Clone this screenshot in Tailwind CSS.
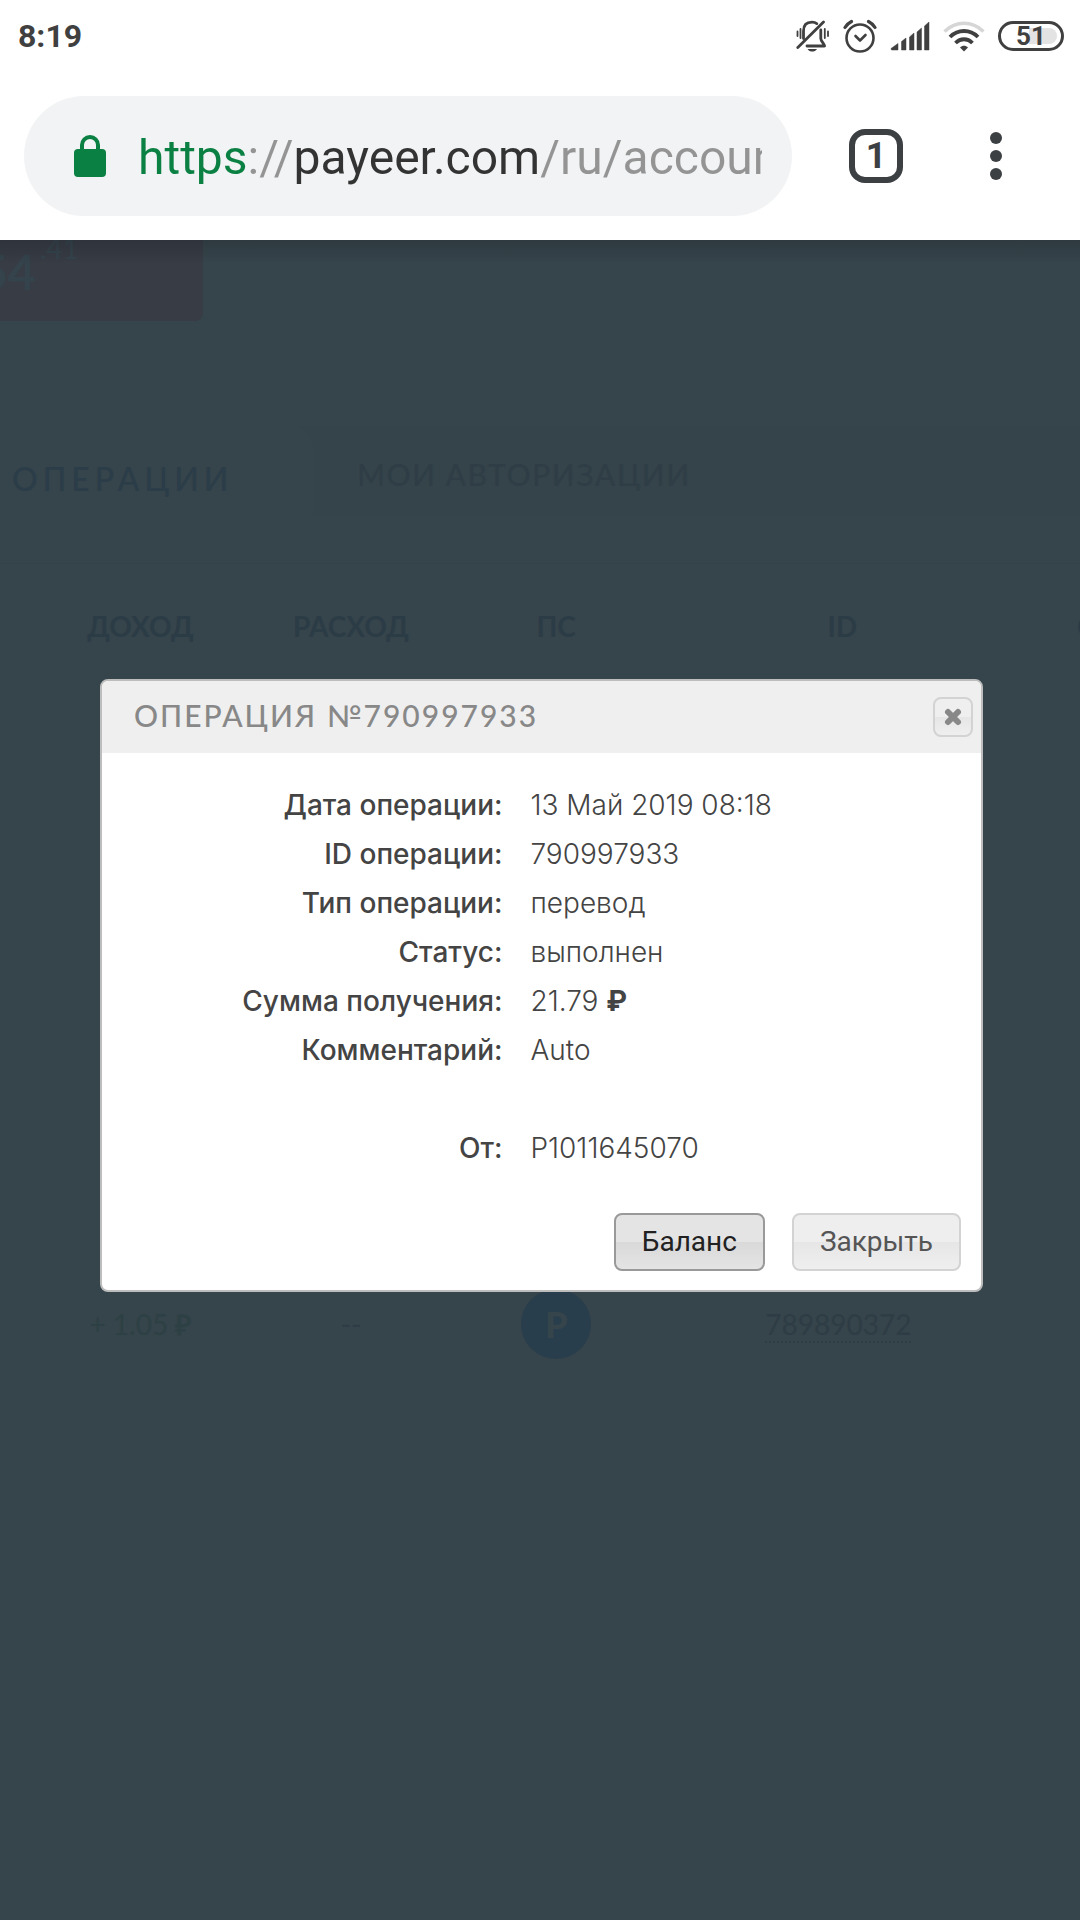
<!DOCTYPE html>
<html lang="ru">

<head>
  <meta charset="UTF-8">
  <meta name="viewport" content="width=device-width, initial-scale=1.0">
  <title>Payeer</title>
  <script src="https://cdn.jsdelivr.net/npm/@tailwindcss/browser@4"></script>
</head>

<body class="bg-[#36444b] min-h-screen flex flex-col overflow-x-hidden">
  <!-- Status bar -->
  <div class="bg-white h-[72px] flex items-center justify-between pl-[18px] pr-4 text-[#404040] font-['Roboto',sans-serif]">
    <span class="text-[32px] leading-none font-bold">8:19</span>
    <div class="flex items-center gap-[13px]">
      <!-- muted bell -->
      <svg width="34" height="34" viewBox="0 0 34 34" fill="none" stroke="currentColor" stroke-width="2.8" stroke-linecap="round">
        <path d="M7.500 19.500V12C7.500 6 11 3.200 16 3.200c2 0 3.600.5 4.800 1.400" />
        <path d="M24.800 11V19.500c0 2.500 3 4.500 3.800 7.500H11" stroke-linejoin="round" />
        <path d="M1.800 28.500L27.500 3" />
        <path d="M4.500 10v9M1.500 12.500v4.500M28.800 10v9M32 12.500v4.500" stroke-width="1.800" />
        <path d="M11.500 30h9.500c-1.300 1.800-2.800 2.600-4.700 2.600s-3.500-.8-4.800-2.600z" fill="currentColor" stroke="none" />
      </svg>
      <!-- alarm -->
      <svg width="34" height="34" viewBox="0 0 34 34" fill="none" stroke="currentColor" stroke-width="2.600" stroke-linecap="round" stroke-linejoin="round">
        <circle cx="17" cy="19" r="13.500" />
        <path d="M12.500 17l4.500 4.500 5.500-5.500" />
        <path d="M2 8.500Q4.500 4.500 8.500 2.500M25.500 2.500Q29.500 4.500 32 8.500" stroke-width="3.200" />
      </svg>
      <!-- signal -->
      <svg width="40" height="30" viewBox="0 0 40 30" fill="currentColor">
        <path d="M1 27.500L8 22.500v6.500H1.500zM11.500 20.500L16 17v12h-4.500zM19.500 16L24 12v17h-4.500zM27 11l4.500-4v22H27zM34.500 5L39 1v28h-4.500z" stroke="currentColor" stroke-width=".5" stroke-linejoin="round" />
      </svg>
      <!-- wifi -->
      <svg width="42" height="32" viewBox="0 0 42 32" fill="none" stroke="currentColor" stroke-width="3.800">
        <path d="M1.500 11.500C13 .5 29 .5 40.500 11.500" stroke="#d6d6d6" stroke-width="3.400" />
        <path d="M7 17c8-8 20-8 28 0" />
        <path d="M12.500 23c5-5 12-5 17 0" />
        <path d="M17 27.500c2.500-2.400 5.500-2.400 8 0L21 31.500z" fill="currentColor" stroke="none" />
      </svg>
      <!-- battery -->
      <div class="relative w-[66px] h-[30px] rounded-full border-3 border-[#404040] flex items-center justify-center">
        <div class="absolute right-1 inset-y-1 w-[28px] rounded-r-full bg-[#e3e3e3]"></div>
        <span class="relative text-[26px] leading-none font-bold">51</span>
      </div>
    </div>
  </div>

  <!-- Browser toolbar -->
  <div class="bg-white h-[168px] flex items-center pl-6 pr-[78px] font-['Roboto',sans-serif]">
    <label class="flex-1 min-w-0 h-[120px] bg-[#f1f3f5] rounded-full flex items-center pl-[50px] pr-[30px] gap-8">
      <svg class="shrink-0" width="32" height="44" viewBox="0 0 32 44">
        <rect y="15" width="32" height="28" rx="4" fill="#0b8043" />
        <path d="M8 17V11a8 8 0 0 1 16 0v6" fill="none" stroke="#0b8043" stroke-width="4" />
      </svg>
      <input type="text" aria-label="Адрес" value="https://payeer.com/ru/account" class="flex-1 min-w-0 h-[72px] pt-1 text-[48px] outline-none text-transparent bg-clip-text bg-[linear-gradient(90deg,#0b8043_109px,#949494_109px,#949494_156px,#333333_156px,#333333_400px,#949494_400px)]">
    </label>
    <button aria-label="Вкладки" class="ml-[57px] size-[54px] rounded-2xl border-6 border-[#3c4043] text-[#3c4043] text-[36px] leading-none font-bold flex items-center justify-center">1</button>
    <button aria-label="Меню" class="ml-[87px] flex flex-col gap-[6px]">
      <span class="size-3 rounded-full bg-[#3c4043]"></span>
      <span class="size-3 rounded-full bg-[#3c4043]"></span>
      <span class="size-3 rounded-full bg-[#3c4043]"></span>
    </button>
  </div>

  <!-- Page under the overlay -->
  <main class="relative flex-1 overflow-hidden font-['Lato',sans-serif]">
    <div class="absolute inset-x-0 top-0 h-6 bg-linear-to-b from-black/15 to-transparent"></div>
    <div class="w-[203px] h-[81px] bg-[#373c45] rounded-br-lg flex items-start text-[#34434c] overflow-hidden">
      <span class="-ml-5 text-[48px] leading-[64px] font-bold">54</span>
      <span class="ml-1 text-[28px] leading-4">.41</span>
    </div>

    <nav class="mt-[105px] h-[90px] flex bg-[#35434a]">
      <a href="#" class="w-[313px] pl-3 bg-[#36444b] rounded-tr-[20px] text-[32px] leading-[106px] font-medium tracking-[5px] text-[#2b3d48]">ОПЕРАЦИИ</a>
      <a href="#" class="pl-11 text-[30px] leading-[96px] font-medium tracking-wider text-[#2f3e46]">МОИ АВТОРИЗАЦИИ</a>
    </nav>

    <table class="mt-[47px] w-full table-fixed text-[28px] text-center text-[#2e3d45] border-t border-[#34424a]">
      <colgroup>
        <col class="w-[3%]">
        <col class="w-[20%]">
        <col class="w-[19%]">
        <col class="w-[19%]">
        <col class="w-[34%]">
        <col class="w-[5%]">
      </colgroup>
      <thead>
        <tr class="h-[124px] text-[#2c3c46]">
          <th></th>
          <th>ДОХОД</th>
          <th>РАСХОД</th>
          <th>ПС</th>
          <th>ID</th>
          <th class="pl-[51px] text-left">С</th>
        </tr>
      </thead>
      <tbody>
        <tr class="h-[574px]">
          <td colspan="6"></td>
        </tr>
        <tr class="h-[124px]">
          <td></td>
          <td class="text-[#2d4144]">+ 1.05 <b>₽</b></td>
          <td>--</td>
          <td>
            <div class="mx-auto size-[70px] rounded-full bg-[#293e4c] text-[#36444b] text-[36px] font-black flex items-center justify-center">P</div>
          </td>
          <td class="pr-2"><a href="#" class="border-b-2 border-dotted border-[#2e3d45]">789890372</a></td>
          <td></td>
        </tr>
      </tbody>
    </table>

    <!-- Dialog -->
    <div class="absolute inset-x-0 top-[439px] pl-[100px] pr-[97px]">
      <div role="dialog" aria-labelledby="dialogTitle" class="bg-white border-2 border-[#bdbdbd] rounded-lg overflow-hidden text-[#444]">
        <div class="h-[72px] bg-[#efefef] flex items-center justify-between pl-8 pr-2">
          <h2 id="dialogTitle" class="text-[30px] leading-[68px] self-start font-medium tracking-[2px] text-[#888]">ОПЕРАЦИЯ №790997933</h2>
          <button aria-label="Закрыть окно" class="size-10 rounded-lg border-2 border-[#d3d3d3] bg-[linear-gradient(#efefef_50%,#e6e6e6_50%,#efefef)] flex items-center justify-center">
            <svg width="20" height="20" viewBox="0 0 20 20" stroke="#888" stroke-width="6" stroke-linecap="round">
              <path d="M5 5l10 10M15 5L5 15" />
            </svg>
          </button>
        </div>

        <dl class="mt-7 grid grid-cols-[8fr_9fr] gap-x-7 font-['Inter',sans-serif] text-[28px] leading-[49px]">
          <dt class="text-right font-medium">Дата операции:</dt>
          <dd class="font-light">13 Май 2019 08:18</dd>
          <dt class="text-right font-medium">ID операции:</dt>
          <dd class="font-light">790997933</dd>
          <dt class="text-right font-medium">Тип операции:</dt>
          <dd class="font-light">перевод</dd>
          <dt class="text-right font-medium">Статус:</dt>
          <dd class="font-light">выполнен</dd>
          <dt class="text-right font-medium">Сумма получения:</dt>
          <dd class="font-light">21.79 <b class="font-bold">₽</b></dd>
          <dt class="text-right font-medium">Комментарий:</dt>
          <dd class="font-light">Auto</dd>
          <dt class="mt-[49px] text-right font-medium">От:</dt>
          <dd class="mt-[49px] font-light">P1011645070</dd>
        </dl>

        <div class="mt-10 mb-[19px] pr-5 flex justify-end gap-[27px] font-['Roboto',sans-serif] text-[28px]">
          <button class="h-[58px] px-[26px] rounded-lg border-2 border-[#999] text-[#212121] bg-[linear-gradient(#e4e4e4_50%,#d9d9d9_50%,#e4e4e4)]">Баланс</button>
          <button class="h-[58px] px-[26px] rounded-lg border-2 border-[#d3d3d3] text-[#555] bg-[linear-gradient(#eeeeee_50%,#e6e6e6_50%,#efefef)]">Закрыть</button>
        </div>
      </div>
    </div>
  </main>
</body>

</html>
